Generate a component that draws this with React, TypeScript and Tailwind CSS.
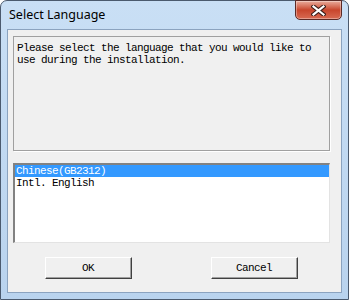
import React from 'react';

const mono = "font-['Liberation_Mono','DejaVu_Sans_Mono',monospace] text-[11px] leading-[12px] tracking-[-0.6px]";

function CloseButton() {
  return (
    <div className="w-[47px] h-[20px] -mt-px rounded-b-[5px] border border-[#5b2a26] bg-gradient-to-b from-[#e8ab9c] via-[#c8452c] to-[#d86a52] flex items-center justify-center shadow-[inset_0_0_0_1px_rgba(255,255,255,0.35)]">
      <svg width="15" height="11" viewBox="0 0 15 11">
        <path d="M2.5 1.5 L12.5 9.5 M12.5 1.5 L2.5 9.5" stroke="#3a1d1a" strokeWidth="4.2" strokeLinecap="square" />
        <path d="M2.5 1.5 L12.5 9.5 M12.5 1.5 L2.5 9.5" stroke="#ffffff" strokeWidth="2.2" strokeLinecap="square" />
      </svg>
    </div>
  );
}

function DialogButton({ label }: { label: string }) {
  return (
    <div className="w-[87px] h-[22px] border-t border-l border-t-white border-l-white border-r border-b border-r-[#404040] border-b-[#404040] bg-[#f0f0f0]">
      <div className={`w-full h-full border-r border-b border-r-[#a0a0a0] border-b-[#a0a0a0] flex items-center justify-center ${mono} text-black`}>
        {label}
      </div>
    </div>
  );
}

export default function App() {
  const languages = ['Chinese(GB2312)', 'Intl. English'];
  return (
    <div className="w-[349px] h-[300px] bg-white">
      <div className="w-full h-full rounded-t-[7px] border border-[#4b5a6e] bg-gradient-to-b from-[#c9dff5] to-[#b9d3ee] flex flex-col px-[6px] pb-[6px]">
        <div className="h-[28px] flex items-start justify-between">
          <span className="mt-[6px] ml-[2px] font-['Noto_Sans',sans-serif] text-[12.5px] leading-[16px] text-black">Select Language</span>
          <CloseButton />
        </div>
        <div className="flex-1 border border-[#8ba3bf] bg-[#f0f0f0] flex flex-col pl-[5px] pr-[11px] pt-[6px]">
          <div className="h-[115px] border border-[#a0a0a0] shadow-[1px_1px_0_#ffffff] px-[3px] pt-[5px]">
            <p className={`${mono} text-black`}>
              Please select the language that you would like to
              <br />
              use during the installation.
            </p>
          </div>
          <div className="mt-[12px] h-[80px] border-t-2 border-l-2 border-t-[#828282] border-l-[#828282] border-r border-b border-r-[#e3e3e3] border-b-[#e3e3e3] bg-white">
            {languages.map((lang, i) => (
              <div
                key={lang}
                className={`h-[12px] pl-[1px] ${mono} ${i === 0 ? 'bg-[#3399ff] text-white' : 'text-black'}`}
              >
                {lang}
              </div>
            ))}
          </div>
          <div className="mt-[14px] flex">
            <div className="ml-[32px]">
              <DialogButton label="OK" />
            </div>
            <div className="ml-[79px]">
              <DialogButton label="Cancel" />
            </div>
          </div>
        </div>
      </div>
    </div>
  );
}
